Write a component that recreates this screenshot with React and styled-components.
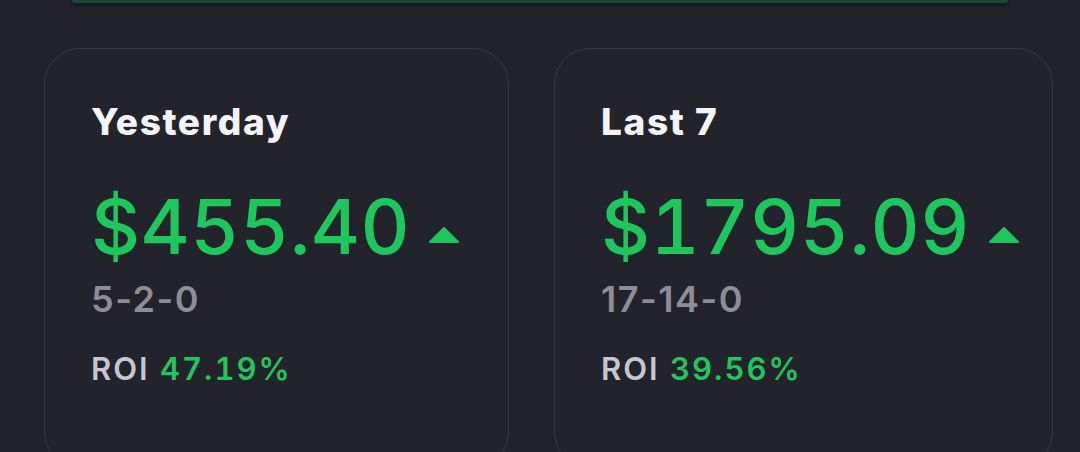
import React from 'react';
import styled, { createGlobalStyle } from 'styled-components';

const GlobalStyle = createGlobalStyle`
  html, body {
    margin: 0;
    padding: 0;
    background-color: #22222a;
    overflow: hidden;
  }
`;

const Page = styled.div`
  width: 1080px;
  height: 452px;
  overflow: hidden;
  background-color: #22222a;
  font-family: Inter, 'Liberation Sans', sans-serif;
`;

const TopCard = styled.div`
  width: 936px;
  height: 3px;
  margin-left: 72px;
  border-radius: 0 0 14px 14px;
  background-color: #1d4738;
  box-shadow: 0 2px 3px rgba(20, 10, 14, 0.6);
`;

const Grid = styled.div`
  display: grid;
  grid-template-columns: 465px 499px;
  gap: 45px;
  padding: 45px 0 0 44px;
`;

const Card = styled.div`
  box-sizing: border-box;
  height: 420px;
  padding: 55px 0 0 46px;
  border: 1.5px solid #393942;
  border-radius: 36px;
  background-color: #23232b;
`;

const Title = styled.div`
  font-size: 37px;
  line-height: 36px;
  font-weight: 800;
  color: #f4f4f8;
  letter-spacing: 1.6px;
`;

const AmountRow = styled.div`
  display: flex;
  align-items: center;
  gap: 18px;
  margin-top: 48px;
`;

const Amount = styled.div`
  font-size: 76px;
  line-height: 76px;
  font-weight: 500;
  color: #1ec75e;
  letter-spacing: 0.5px;
  font-variant-numeric: tabular-nums;
`;

const Arrow = styled.svg`
  width: 32px;
  height: 18px;
  margin-top: 18px;
`;

const Record = styled.div`
  margin-top: 17px;
  font-size: 36px;
  line-height: 36px;
  font-weight: 600;
  color: #8d8d96;
  letter-spacing: 1.5px;
`;

const Roi = styled.div`
  margin-top: 37px;
  font-size: 31px;
  line-height: 30px;
  font-weight: 600;
  color: #c6c6ce;
  letter-spacing: 2px;
  font-variant-numeric: tabular-nums;
`;

const RoiValue = styled.span`
  color: #22c55e;
`;

const UpArrow = () => (
  <Arrow viewBox="0 0 32 18">
    <polygon
      points="16,2 30,16 2,16"
      fill="#1ec75e"
      stroke="#1ec75e"
      strokeWidth="2"
      strokeLinejoin="round"
    />
  </Arrow>
);

const StatCard = ({ title, amount, record, roi }) => (
  <Card>
    <Title>{title}</Title>
    <AmountRow>
      <Amount>{amount}</Amount>
      <UpArrow />
    </AmountRow>
    <Record>{record}</Record>
    <Roi>
      ROI <RoiValue>{roi}</RoiValue>
    </Roi>
  </Card>
);

const App = () => (
  <Page>
    <GlobalStyle />
    <TopCard />
    <Grid>
      <StatCard title="Yesterday" amount="$455.40" record="5-2-0" roi="47.19%" />
      <StatCard title="Last 7" amount="$1795.09" record="17-14-0" roi="39.56%" />
    </Grid>
  </Page>
);

export default App;
